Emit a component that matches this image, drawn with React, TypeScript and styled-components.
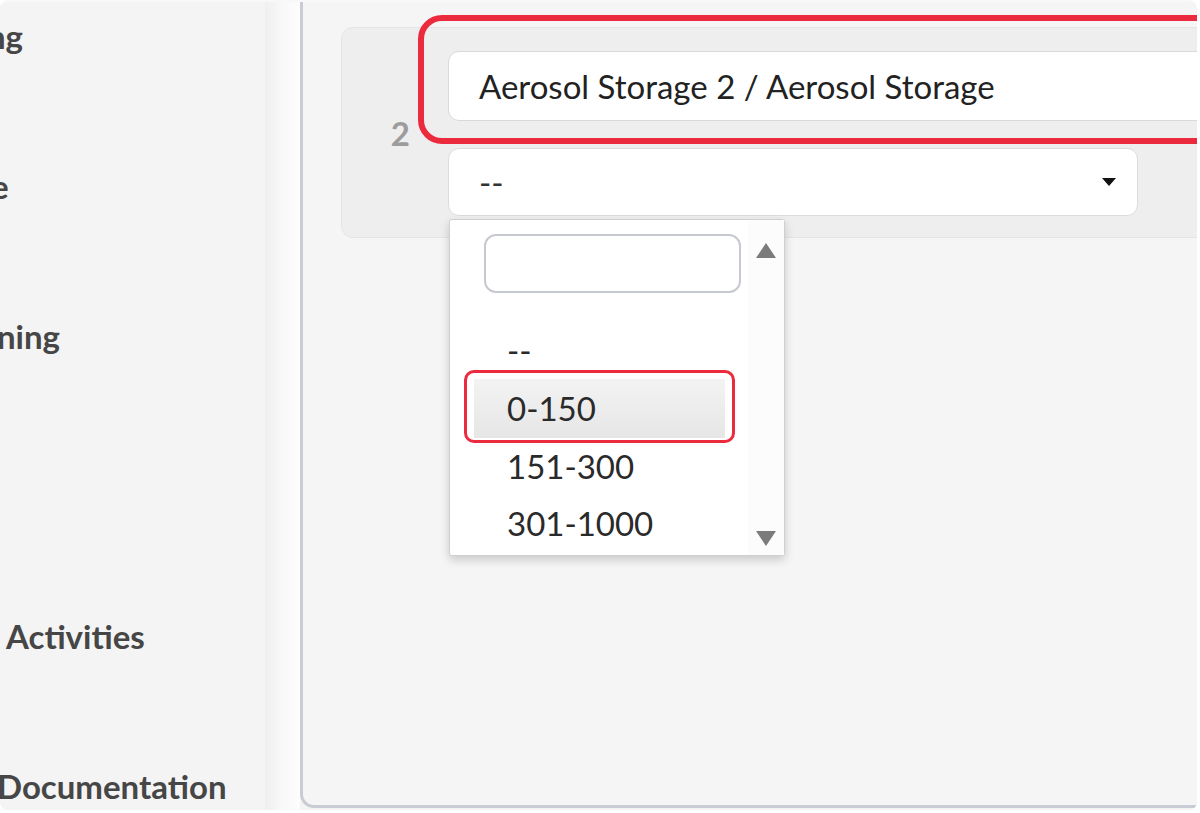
import React from "react";
import styled, { createGlobalStyle } from "styled-components";

const GlobalStyle = createGlobalStyle`
  html, body { margin: 0; padding: 0; background: #ffffff; }
  body { font-family: Lato, "Open Sans", "Liberation Sans", sans-serif; }
  * { box-sizing: border-box; }
`;

const Frame = styled.div`
  width: 1200px;
  height: 813px;
  background: #ffffff;
  overflow: hidden;
`;

const Screen = styled.div`
  width: 1197px;
  height: 810px;
  display: flex;
  background: #f4f4f4;
  border-top: 2px solid #f8f8f8;
  border-radius: 8px;
  overflow: hidden;
`;

const Sidebar = styled.nav`
  width: 265px;
  flex: none;
  display: flex;
  flex-direction: column;
  gap: 114px;
  padding-top: 16px;
  background: #f4f4f4;
  overflow: hidden;
`;

const NavItem = styled.div<{ $indent: number }>`
  height: 36px;
  display: flex;
  align-items: center;
  margin-left: ${(p) => p.$indent}px;
  font-size: 33px;
  font-weight: 700;
  color: #464646;
  white-space: nowrap;
`;

const Gutter = styled.div`
  width: 35px;
  flex: none;
  background: linear-gradient(to right, #efefef 0%, #f8f8f8 45%, #fdfdfd 100%);
`;

const Main = styled.main`
  flex: 1;
  min-width: 0;
  height: 806px;
  background: #f5f5f5;
  border-left: 3px solid #c9ccd4;
  border-bottom: 3px solid #c9ccd4;
  border-bottom-left-radius: 14px;
  padding: 25px 0 0 38px;
  overflow: hidden;
`;

const Card = styled.section`
  width: 900px;
  height: 211px;
  display: flex;
  align-items: center;
  background: #eeeeee;
  border: 1px solid #e2e4e9;
  border-radius: 12px;
`;

const RowNumber = styled.div`
  width: 106px;
  flex: none;
  padding-right: 38px;
  text-align: right;
  font-size: 33px;
  font-weight: 700;
  color: #9c9c9c;
`;

const Fields = styled.div`
  display: flex;
  flex-direction: column;
  gap: 27px;
  padding-top: 1px;
`;

const Highlight = styled.div`
  position: relative;
  &::after {
    content: "";
    position: absolute;
    left: -30px;
    top: -36px;
    right: -200px;
    bottom: -23px;
    border: 6px solid #ec2a3e;
    border-radius: 24px;
    pointer-events: none;
  }
`;

const TextBox = styled.div`
  width: 800px;
  height: 70px;
  display: flex;
  align-items: center;
  padding-left: 30px;
  background: #ffffff;
  border: 1px solid #d9d9d9;
  border-radius: 11px;
  font-size: 33px;
  color: #222222;
`;

const SelectWrap = styled.div`
  position: relative;
  width: 690px;
`;

const SelectBox = styled.div`
  height: 68px;
  display: flex;
  align-items: center;
  justify-content: space-between;
  padding: 0 21px 0 30px;
  background: #ffffff;
  border: 1px solid #dcdcdc;
  border-radius: 11px;
  font-size: 33px;
  color: #333333;
`;

const Caret = styled.span<{ $up?: boolean; $color: string; $w: number; $h: number }>`
  width: 0;
  height: 0;
  border-left: ${(p) => p.$w / 2}px solid transparent;
  border-right: ${(p) => p.$w / 2}px solid transparent;
  ${(p) =>
    p.$up
      ? `border-bottom: ${p.$h}px solid ${p.$color};`
      : `border-top: ${p.$h}px solid ${p.$color};`}
`;

const Dropdown = styled.div`
  position: absolute;
  top: calc(100% + 3px);
  left: 1px;
  width: 336px;
  height: 337px;
  display: flex;
  background: #ffffff;
  border: 1px solid #d0d0d0;
  border-radius: 3px;
  box-shadow: 0 4px 10px rgba(0, 0, 0, 0.18);
  z-index: 10;
`;

const ListArea = styled.div`
  flex: 1;
  display: flex;
  flex-direction: column;
  padding-top: 14px;
`;

const SearchBox = styled.div`
  width: 257px;
  height: 59px;
  margin-left: 34px;
  border: 2px solid #c7c9d1;
  border-radius: 12px;
  background: #ffffff;
`;

const Options = styled.ul`
  list-style: none;
  margin: 29px 0 0 24px;
  padding: 0;
  width: 251px;
`;

const Option = styled.li<{ $active?: boolean }>`
  position: relative;
  height: ${(p) => (p.$active ? 59 : 57)}px;
  display: flex;
  align-items: center;
  padding-left: 33px;
  font-size: 33px;
  color: #2a2a2a;
  background: ${(p) =>
    p.$active ? "linear-gradient(to bottom, #f3f3f3, #e6e6e6)" : "transparent"};
  ${(p) =>
    p.$active &&
    `&::after {
      content: "";
      position: absolute;
      left: -10px;
      right: -10px;
      top: -9px;
      bottom: -5px;
      border: 3px solid #ec2a3e;
      border-radius: 10px;
    }`}
`;

const ScrollCol = styled.div`
  width: 36px;
  flex: none;
  display: flex;
  flex-direction: column;
  align-items: center;
  justify-content: space-between;
  padding: 23px 0 9px;
  background: #fcfcfc;
`;

const sideItems: { label: string; indent: number }[] = [
  { label: "ng", indent: -13 },
  { label: "e", indent: -9 },
  { label: "ning", indent: -3 },
  { label: "", indent: 0 },
  { label: "Activities", indent: 6 },
  { label: "Documentation", indent: -3 },
];

const options = ["--", "0-150", "151-300", "301-1000"];

export default function App() {
  return (
    <>
      <GlobalStyle />
      <Frame>
        <Screen>
          <Sidebar>
            {sideItems.map((it, i) => (
              <NavItem key={i} $indent={it.indent}>
                {it.label}
              </NavItem>
            ))}
          </Sidebar>
          <Gutter />
          <Main>
            <Card>
              <RowNumber>2</RowNumber>
              <Fields>
                <Highlight>
                  <TextBox>Aerosol Storage 2 / Aerosol Storage</TextBox>
                </Highlight>
                <SelectWrap>
                  <SelectBox>
                    <span>--</span>
                    <Caret $color="#111" $w={14} $h={8} />
                  </SelectBox>
                  <Dropdown>
                    <ListArea>
                      <SearchBox />
                      <Options>
                        {options.map((o) => (
                          <Option key={o} $active={o === "0-150"}>
                            {o}
                          </Option>
                        ))}
                      </Options>
                    </ListArea>
                    <ScrollCol>
                      <Caret $up $color="#7b7b7b" $w={21} $h={15} />
                      <Caret $color="#7b7b7b" $w={21} $h={15} />
                    </ScrollCol>
                  </Dropdown>
                </SelectWrap>
              </Fields>
            </Card>
          </Main>
        </Screen>
      </Frame>
    </>
  );
}
